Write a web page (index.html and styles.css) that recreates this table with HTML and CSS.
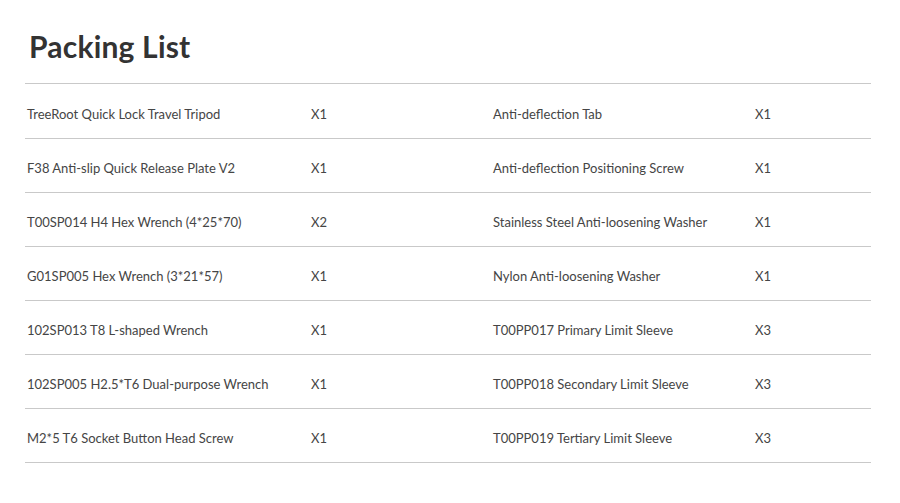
FILE: index.html
```html
<html>
<head>
    <title>Packing List</title>
    <link rel="stylesheet" href="styles.css">
</head>
<body>
    <div class="packing">
        <h2 class="title">Packing List</h2>
        <div class="list">
            <div class="row">
                <span>TreeRoot Quick Lock Travel Tripod</span><span>X1</span>
                <span>Anti-deflection Tab</span><span>X1</span>
            </div>
            <div class="row">
                <span>F38 Anti-slip Quick Release Plate V2</span><span>X1</span>
                <span>Anti-deflection Positioning Screw</span><span>X1</span>
            </div>
            <div class="row">
                <span>T00SP014 H4 Hex Wrench (4*25*70)</span><span>X2</span>
                <span>Stainless Steel Anti-loosening Washer</span><span>X1</span>
            </div>
            <div class="row">
                <span>G01SP005 Hex Wrench (3*21*57)</span><span>X1</span>
                <span>Nylon Anti-loosening Washer</span><span>X1</span>
            </div>
            <div class="row">
                <span>102SP013 T8 L-shaped Wrench</span><span>X1</span>
                <span>T00PP017 Primary Limit Sleeve</span><span>X3</span>
            </div>
            <div class="row">
                <span>102SP005 H2.5*T6 Dual-purpose Wrench</span><span>X1</span>
                <span>T00PP018 Secondary Limit Sleeve</span><span>X3</span>
            </div>
            <div class="row">
                <span>M2*5 T6 Socket Button Head Screw</span><span>X1</span>
                <span>T00PP019 Tertiary Limit Sleeve</span><span>X3</span>
            </div>
        </div>
    </div>
</body>
</html>
```

FILE: styles.css
```css
body {
  margin: 0;
  background: #ffffff;
  font-family: 'Lato', 'Open Sans', sans-serif;
  color: #454545;
}
.packing {
  padding: 28px 29px 0 25px;
  width: 846px;
}
.title {
  margin: 0 0 19px 4px;
  font-size: 30px;
  font-weight: 700;
  color: #333333;
  line-height: 36px;
  letter-spacing: 0.2px;
}
.list {
  border-top: 1px solid #c9c9c9;
}
.row {
  display: grid;
  grid-template-columns: 284px 182px 262px 1fr;
  height: 53px;
  align-items: center;
  border-bottom: 1px solid #c9c9c9;
  font-size: 13px;
}
.row:first-child {
  height: 54px;
}
.row span {
  padding: 5px 0 0 2px;
}
```
